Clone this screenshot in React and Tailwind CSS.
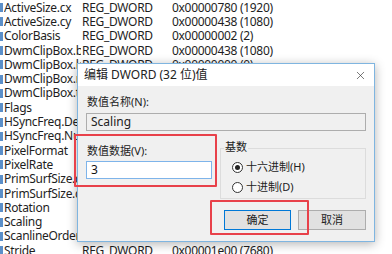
import React from "react";
import { X } from "lucide-react";

const rows = [
  ["ActiveSize.cx", "REG_DWORD", "0x00000780 (1920)"],
  ["ActiveSize.cy", "REG_DWORD", "0x00000438 (1080)"],
  ["ColorBasis", "REG_DWORD", "0x00000002 (2)"],
  ["DwmClipBox.b...", "REG_DWORD", "0x00000438 (1080)"],
  ["DwmClipBox.left", "REG_DWORD", "0x00000000 (0)"],
  ["DwmClipBox.ri", "REG_DWORD", "0x00000000 (0)"],
  ["DwmClipBox.top", "REG_DWORD", "0x00000000 (0)"],
  ["Flags", "REG_DWORD", "0x00000000 (0)"],
  ["HSyncFreq.De...", "REG_DWORD", "0x00000000 (0)"],
  ["HSyncFreq.Nu...", "REG_DWORD", "0x00000000 (0)"],
  ["PixelFormat", "REG_DWORD", "0x00000000 (0)"],
  ["PixelRate", "REG_DWORD", "0x00000000 (0)"],
  ["PrimSurfSize.cx", "REG_DWORD", "0x00000000 (0)"],
  ["PrimSurfSize.cy", "REG_DWORD", "0x00000000 (0)"],
  ["Rotation", "REG_DWORD", "0x00000000 (0)"],
  ["Scaling", "REG_DWORD", "0x00000000 (0)"],
  ["ScanlineOrderi", "REG_DWORD", "0x00000000 (0)"],
  ["Stride", "REG_DWORD", "0x00001e00 (7680)"],
];

const font = { fontFamily: '"Noto Sans", "Noto Sans CJK SC", sans-serif' };

function Radio({ checked, label }) {
  return (
    <div className="flex items-center gap-[3px] h-[20px]">
      <span className="w-[11px] h-[11px] rounded-full border border-[#333] bg-white flex items-center justify-center">
        {checked && <span className="w-[5px] h-[5px] rounded-full bg-[#222]" />}
      </span>
      <span className="text-[11px] text-[#222]">{label}</span>
    </div>
  );
}

export default function App() {
  return (
    <div className="relative w-[392px] h-[254px] bg-white overflow-hidden" style={font}>
      <div className="flex flex-col pt-[0.5px]">
        {rows.map(([name, type, data]) => (
          <div key={name} className="flex items-center h-[14.3px] text-[12px] tracking-[-0.3px] leading-[14px] text-[#1e1e1e]">
            <span className="w-[3px] h-[9px] bg-[#5b8fc9] mr-[1px] shrink-0" />
            <span className="w-[77px] mr-[1px] shrink-0 whitespace-nowrap overflow-hidden">{name}</span>
            <span className="w-[90px] shrink-0 whitespace-nowrap">{type}</span>
            <span className="whitespace-nowrap">{data}</span>
          </div>
        ))}
      </div>

      {/* dialog */}
      <div className="absolute left-[77px] top-[63px] w-[298px] h-[179px] border border-[#7fb5e0] bg-[#f0f0f0] shadow-[0_2px_10px_rgba(0,0,0,0.3)] flex flex-col">
        <div className="h-[22px] bg-white flex items-center justify-between pl-[6px] pr-[7px]">
          <span className="text-[12px] text-[#222]">编辑 DWORD (32 位)值</span>
          <X size={13} strokeWidth={1.2} className="text-[#333]" />
        </div>
        <div className="flex flex-col px-[8px] pt-[9px]">
          <span className="text-[11px] text-[#222] leading-[14px] pl-[1px]">数值名称(N):</span>
          <div className="mt-[4px] h-[18px] border border-[#adadad] bg-[#f0f0f0] flex items-center px-[4px] text-[12px] text-[#222]">
            Scaling
          </div>
          <div className="flex mt-[9px]">
            <div className="flex flex-col w-[126px]">
              <span className="text-[11px] text-[#222] leading-[14px] mt-[4px] pl-[1px]">数值数据(V):</span>
              <div className="mt-[3px] h-[18px] border border-[#7eb4ea] bg-white flex items-center px-[4px] text-[12px] text-[#111]">
                3
              </div>
            </div>
            <div className="ml-[8px] flex-1 relative">
              <div className="mt-[8px] h-[51px] border border-[#dcdcdc] pl-[11px] pt-[8px] flex flex-col">
                <Radio checked label="十六进制(H)" />
                <Radio label="十进制(D)" />
              </div>
              <span className="absolute left-[4px] top-[0px] px-[1px] bg-[#f0f0f0] text-[11px] leading-[14px] text-[#222]">基数</span>
            </div>
          </div>
          <div className="flex justify-end gap-[7px] mt-[11px]">
            <div className="w-[67px] h-[20px] border border-[#0078d7] bg-[#e1e1e1] flex items-center justify-center text-[11px] text-[#222]">
              确定
            </div>
            <div className="w-[68px] h-[20px] border border-[#adadad] bg-[#e1e1e1] flex items-center justify-center text-[11px] text-[#222]">
              取消
            </div>
          </div>
        </div>
      </div>

      {/* red highlight boxes */}
      <div className="absolute left-[74px] top-[134px] w-[143px] h-[53px] border-[2.5px] border-[#e8414a] rounded-[1px]" />
      <div className="absolute left-[210px] top-[200px] w-[99px] h-[35px] border-[2.5px] border-[#e8414a] rounded-[1px]" />
    </div>
  );
}
